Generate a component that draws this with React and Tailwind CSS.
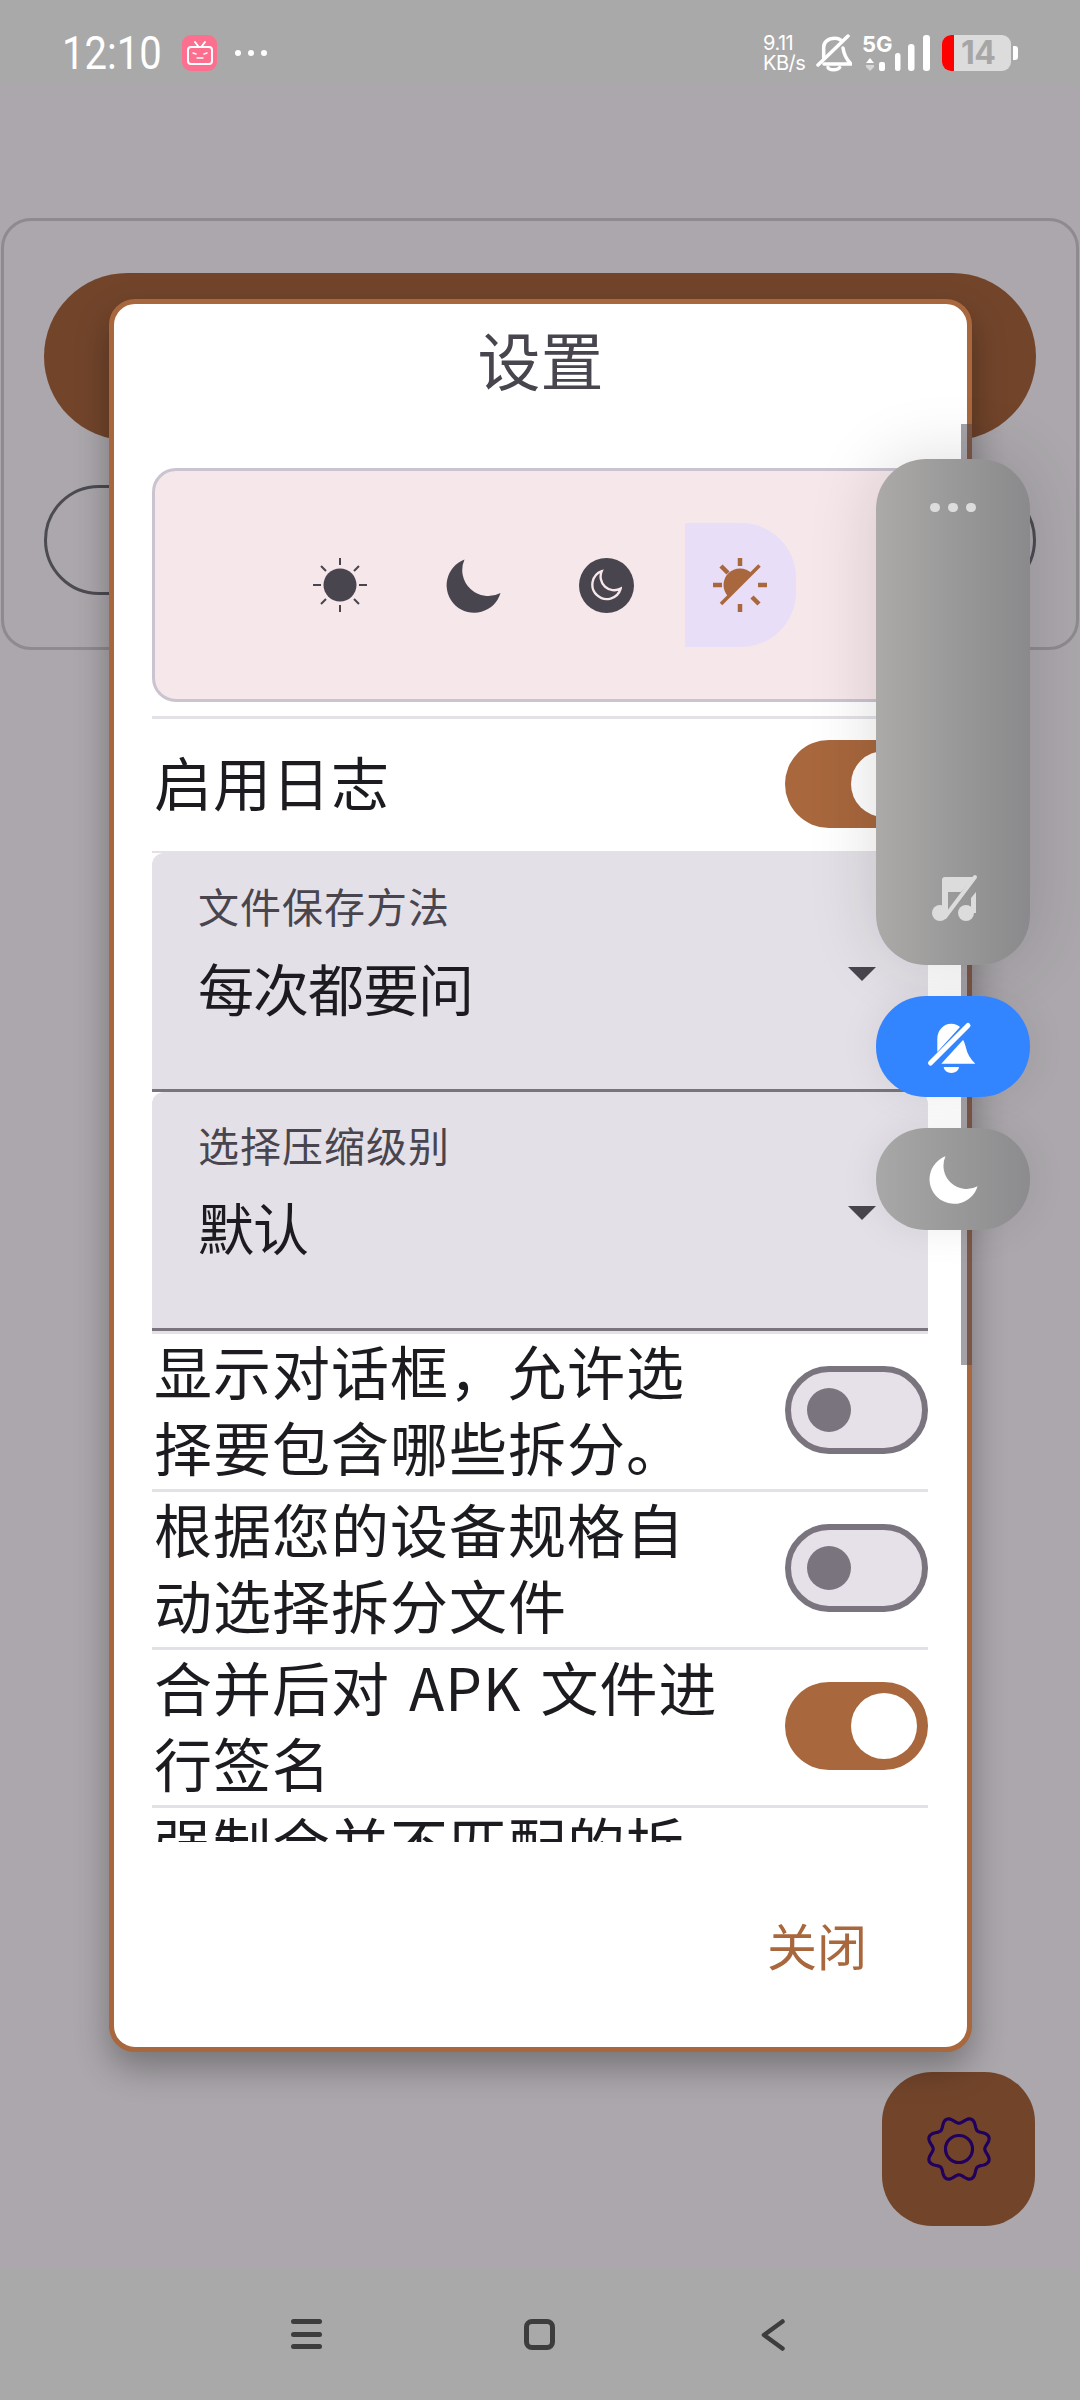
import React from "react";

const CJK = { fontFamily: '"Noto Sans CJK SC", "Noto Sans", sans-serif' };
const MOON = "M18.500 1.500A27.500 27.500 0 1 0 54.500 35A26 26 0 0 1 18.500 1.500Z";

function gearPath() {
  const pts = [];
  for (let i = 0; i < 240; i++) {
    const t = (i / 240) * Math.PI * 2;
    const r = 29 - 3.2 * Math.cos(8 * t);
    pts.push(`${(36 + r * Math.sin(t)).toFixed(2)} ${(36 - r * Math.cos(t)).toFixed(2)}`);
  }
  return "M" + pts.join("L") + "Z";
}

function Toggle({ on }) {
  if (on) {
    return (
      <div className="w-[143px] h-[88px] mb-[3px] shrink-0 rounded-full bg-[#a8673d] flex items-center justify-end pr-[11px]">
        <div className="w-[66px] h-[66px] rounded-full bg-white" />
      </div>
    );
  }
  return (
    <div className="w-[143px] h-[88px] mb-[3px] shrink-0 rounded-full bg-[#e6e0e9] border-[6px] border-[#79747e] flex items-center pl-[16px]">
      <div className="w-[44px] h-[44px] rounded-full bg-[#79747e]" />
    </div>
  );
}

function Row({ text, on }) {
  return (
    <>
      <div className="flex items-center justify-between h-[155px] shrink-0 pl-[2px]">
        <div className="w-[580px] pb-[8px] text-[58px] leading-[76px] tracking-[1px] [word-spacing:5px] text-[#1d1b20]">{text}</div>
        <Toggle on={on} />
      </div>
      <div className="h-[3px] shrink-0 bg-[#e4e1e6]" />
    </>
  );
}

function Dropdown({ label, value }) {
  return (
    <div className="h-[239px] shrink-0 bg-[#e4e0e7] rounded-t-[12px] border-b-[3px] border-[#79747e] pl-[46px] pr-[52px] pt-[27px]">
      <div className="text-[41px] leading-[50px] tracking-[1px] text-[#49454f]">{label}</div>
      <div className="flex justify-between items-start mt-[22px]">
        <div className="text-[56px] leading-[70px] tracking-[-1px] text-[#1d1b20]">{value}</div>
        <svg width="28" height="14" viewBox="0 0 28 14" className="mt-[15px]"><path d="M0 0H28L14 14Z" fill="#49454f" /></svg>
      </div>
    </div>
  );
}

function StatusBar() {
  return (
    <div className="h-[84px] shrink-0 bg-[#a9a9a9] flex items-center pl-[62px] pr-[62px] pt-[22px]">
      <div className="w-[98px] text-[46px] leading-[50px] text-white origin-left scale-x-[0.87] whitespace-nowrap" style={{ fontFamily: "Roboto, sans-serif" }}>12:10</div>
      <div className="ml-[22px] w-[35px] h-[36px] rounded-[9px] bg-[#fd6f8e] flex items-center justify-center">
        <svg width="28" height="28" viewBox="0 0 28 28" fill="none" stroke="#fff" strokeWidth="2" strokeLinecap="round">
          <rect x="2" y="8" width="24" height="17" rx="3" />
          <path d="M9 3l3 4M19 3l-3 4" />
          <path d="M7 14l3 1M21 14l-3 1M11 19h6" strokeWidth="1.400" />
        </svg>
      </div>
      <div className="ml-[18px] flex gap-[7px]">
        <div className="w-[6px] h-[6px] rounded-full bg-white" />
        <div className="w-[6px] h-[6px] rounded-full bg-white" />
        <div className="w-[6px] h-[6px] rounded-full bg-white" />
      </div>
      <div className="ml-auto flex items-center" style={{ fontFamily: "Inter, sans-serif" }}>
        <div className="w-[44px] text-white text-[20px] leading-[20px] tracking-[-0.5px]">
          <div>9.11</div>
          <div>KB/s</div>
        </div>
        <svg className="ml-[9px]" width="36" height="38" viewBox="0 0 36 38" fill="none" stroke="#fff" strokeWidth="3.500" strokeLinecap="round" strokeLinejoin="round">
          <path d="M7.700 24V13C7.700 8 12 4.300 19 4.300c3 0 5 1 6.500 2.500M27 14c1 7 4 12 8 16H8" />
          <path d="M12 33.500c1 3 10 3 11.700 0" />
          <path d="M2 31L32 2" />
        </svg>
        <div className="relative ml-[10px] w-[68px] h-[36px]">
          <svg width="68" height="36" viewBox="0 0 68 36" className="block">
            <path d="M4 30h8v2l-4 4-4-4z" fill="#d6d6d6" />
            <path d="M8 23l4 5h-8z" fill="#fff" />
            <rect x="17" y="27" width="6" height="9" rx="2" fill="#fff" />
            <rect x="33" y="18" width="5.500" height="18" rx="2.500" fill="#fff" />
            <rect x="46" y="9" width="6.500" height="27" rx="3" fill="#fff" />
            <rect x="61" y="0" width="7" height="36" rx="3" fill="#fff" />
          </svg>
          <div className="absolute left-0 top-[-1px] text-[22px] leading-[20px] font-bold tracking-[0px] text-white">5G</div>
        </div>
        <div className="ml-[12px] w-[69px] h-[36px] rounded-[9px] bg-[#dcdcdc] flex items-center">
          <div className="w-[12px] h-full rounded-l-[9px] bg-[#ff0000]" />
          <div className="ml-[7px] text-[32px] leading-[36px] font-bold text-[#a6a6a6] tracking-[-0.5px]">14</div>
        </div>
        <div className="ml-[2px] w-[5px] h-[14px] rounded-r-[3px] bg-white" />
      </div>
    </div>
  );
}

function NavBar() {
  return (
    <div className="h-[131px] shrink-0 bg-[#a9a9a9] flex pl-[291px] pt-[50px]">
      <div className="w-[31px] h-[30px] flex flex-col justify-between">
        <div className="h-[5px] rounded-full bg-[#3d3d3d]" />
        <div className="h-[5px] rounded-full bg-[#3d3d3d]" />
        <div className="h-[5px] rounded-full bg-[#3d3d3d]" />
      </div>
      <div className="ml-[202px] w-[31px] h-[31px] rounded-[8px] border-[5px] border-[#3d3d3d]" />
      <svg className="ml-[206px]" width="24" height="32" viewBox="0 0 24 32" fill="none" stroke="#3d3d3d" strokeWidth="4.500" strokeLinecap="round" strokeLinejoin="round">
        <path d="M21.500 2.500L3 16l18.500 13.500" />
      </svg>
    </div>
  );
}

function ThemeBox() {
  return (
    <div className="h-[234px] shrink-0 bg-[#f6e7ea] border-[3px] border-[#cac4d0] rounded-[24px] flex items-center justify-center gap-[22.5px]">
      <div className="w-[111px] h-[124px] flex items-center justify-center">
        <svg width="60" height="60" viewBox="0 0 60 60" fill="#49454f" stroke="#49454f" strokeWidth="2">
          <circle cx="30" cy="30" r="16.500" stroke="none" />
          <path d="M30 3v7M30 50v7M3 30h8M49 30h8M11 11l5 5M44 44l5 5M49 11l-5 5M16 44l-5 5" />
        </svg>
      </div>
      <div className="w-[111px] h-[124px] flex items-center justify-center">
        <svg width="55" height="55" viewBox="0 0 55 55"><path d={MOON} fill="#49454f" /></svg>
      </div>
      <div className="w-[111px] h-[124px] flex items-center justify-center">
        <svg width="55" height="55" viewBox="0 0 55 55">
          <circle cx="27.500" cy="27.500" r="27.500" fill="#49454f" />
          <svg x="12" y="11.500" width="31" height="32" viewBox="-2 -1 59 60">
            <path d={MOON} fill="none" stroke="#f6e7ea" strokeWidth="4.500" />
          </svg>
        </svg>
      </div>
      <div className="w-[111px] h-[124px] bg-[#e8def8] rounded-r-[55px] flex items-center justify-center">
        <svg width="60" height="60" viewBox="0 0 60 60" fill="#a8673d" stroke="#a8673d" strokeWidth="4.500">
          <path d="M18.330 41.670A16.500 16.500 0 0 1 41.670 18.330Z" stroke="none" />
          <path d="M30 3v8M30 49v8M3 30h9M48 30h9M11 11l7 7M42 42l7 7" />
          <path d="M49.500 10.500L11 49" strokeWidth="3.500" />
        </svg>
      </div>
    </div>
  );
}

function Dialog() {
  return (
    <div className="absolute left-[109px] top-[299px] w-[863px] h-[1753px] bg-white border-[5px] border-[#a8673d] rounded-[26px] shadow-[0_16px_34px_rgba(0,0,0,0.3)] flex flex-col" style={CJK}>
      <div className="pt-[14px] h-[164px] shrink-0 text-center text-[63px] leading-[80px] text-[#49454f]">设置</div>
      <div className="h-[1374px] shrink-0 overflow-hidden mx-[38px] mr-[39px] flex flex-col">
        <ThemeBox />
        <div className="h-[3px] shrink-0 mt-[14px] bg-[#e4e1e6]" />
        <div className="flex items-center justify-between h-[132px] shrink-0 pl-[2px]">
          <div className="pb-[8px] text-[58px] leading-[77px] tracking-[1px] text-[#1d1b20]">启用日志</div>
          <Toggle on />
        </div>
        <div className="h-[2px] shrink-0 bg-[#e4e1e6]" />
        <Dropdown label="文件保存方法" value="每次都要问" />
        <Dropdown label="选择压缩级别" value="默认" />
        <div className="h-[3px] shrink-0 bg-[#e4e1e6]" />
        <Row text="显示对话框，允许选择要包含哪些拆分。" on={false} />
        <Row text="根据您的设备规格自动选择拆分文件" on={false} />
        <Row text="合并后对 APK 文件进行签名" on />
        <div className="flex items-start justify-between h-[232px] shrink-0 pl-[2px]">
          <div className="w-[580px] -mt-[4px] text-[58px] leading-[76px] tracking-[1px] text-[#1d1b20]">强制合并不匹配的拆分文件</div>
          <div className="mt-[72px]"><Toggle on={false} /></div>
        </div>
      </div>
      <div className="flex justify-end pr-[100px] pt-[72px]">
        <div className="text-[50px] leading-[60px] text-[#a8673d]">关闭</div>
      </div>
      <div className="absolute left-[847px] top-[120px] w-[11px] h-[941px] bg-[rgba(73,69,79,0.5)]" />
    </div>
  );
}

function FloatingPanel() {
  return (
    <div className="absolute left-[876px] top-[459px] w-[154px] flex flex-col gap-[31px]">
      <div className="h-[506px] rounded-[50px] bg-gradient-to-r from-[#abaaa8] to-[#8a898b] shadow-[0_0_70px_rgba(0,0,0,0.14)] flex flex-col items-center justify-between pt-[44px] pb-[43px]">
        <div className="flex gap-[8px]">
          <div className="w-[10px] h-[9px] rounded-full bg-[#dcdcdc]" />
          <div className="w-[10px] h-[9px] rounded-full bg-[#dcdcdc]" />
          <div className="w-[10px] h-[9px] rounded-full bg-[#dcdcdc]" />
        </div>
        <svg width="50" height="52" viewBox="0 0 50 52" fill="#dcdcdc">
          <circle cx="12" cy="43" r="8" />
          <circle cx="38" cy="43" r="8" />
          <path d="M14 10a3 3 0 0 1 3-3h29L33 22H20v20h-6z" />
          <path d="M43 28l5-6v21h-5z" />
          <path d="M47 7L17 47" stroke="#dcdcdc" strokeWidth="4" strokeLinecap="round" fill="none" />
        </svg>
      </div>
      <div className="h-[101px] rounded-[50px] bg-[#3385ff] shadow-[0_0_40px_rgba(0,0,0,0.08)] flex items-center justify-center">
        <svg width="60" height="60" viewBox="0 0 60 60" fill="#fff">
          <path d="M14.300 35V22A14 15 0 0 1 28.300 6.700C32 6.700 35 8 37 10Z" />
          <path d="M18.300 46.700L40 23C41 24 42 27 43 31Q45 40 52.300 46.700Z" />
          <path d="M20.700 50H36A7.600 6 0 0 1 20.700 50Z" />
          <path d="M7.500 46L45 8.500" stroke="#fff" strokeWidth="5" strokeLinecap="round" fill="none" />
        </svg>
      </div>
      <div className="h-[102px] rounded-[50px] bg-gradient-to-r from-[#a9a8a8] to-[#8c8b8d] shadow-[0_0_40px_rgba(0,0,0,0.08)] flex items-center justify-center">
        <svg width="49" height="49" viewBox="0 0 55 55"><path d={MOON} fill="#fff" /></svg>
      </div>
    </div>
  );
}

export default function App() {
  return (
    <div className="relative w-[1080px] h-[2400px] overflow-hidden flex flex-col bg-[#aba7ac]" style={CJK}>
      <StatusBar />
      <div className="flex-1 flex flex-col bg-[#aba7ac]">
        <div className="mt-[134px] ml-[1px] mr-[1px] h-[432px] rounded-[30px] border-[3px] border-[#8e8a8f] flex flex-col px-[40px] pt-[52px]">
          <div className="h-[167px] rounded-full bg-[#72452b]" />
          <div className="mt-[45px] h-[110px] rounded-full border-[3px] border-[#4d4b52]" />
        </div>
        <div className="mt-auto mb-[43px] mr-[45px] self-end w-[153px] h-[154px] rounded-[50px] bg-[#72452b] flex items-center justify-center">
          <svg width="72" height="72" viewBox="0 0 72 72" fill="none" stroke="#21005d" strokeWidth="3.200">
            <path d={gearPath()} />
            <circle cx="36" cy="36" r="13.500" />
          </svg>
        </div>
      </div>
      <NavBar />
      <Dialog />
      <FloatingPanel />
    </div>
  );
}
